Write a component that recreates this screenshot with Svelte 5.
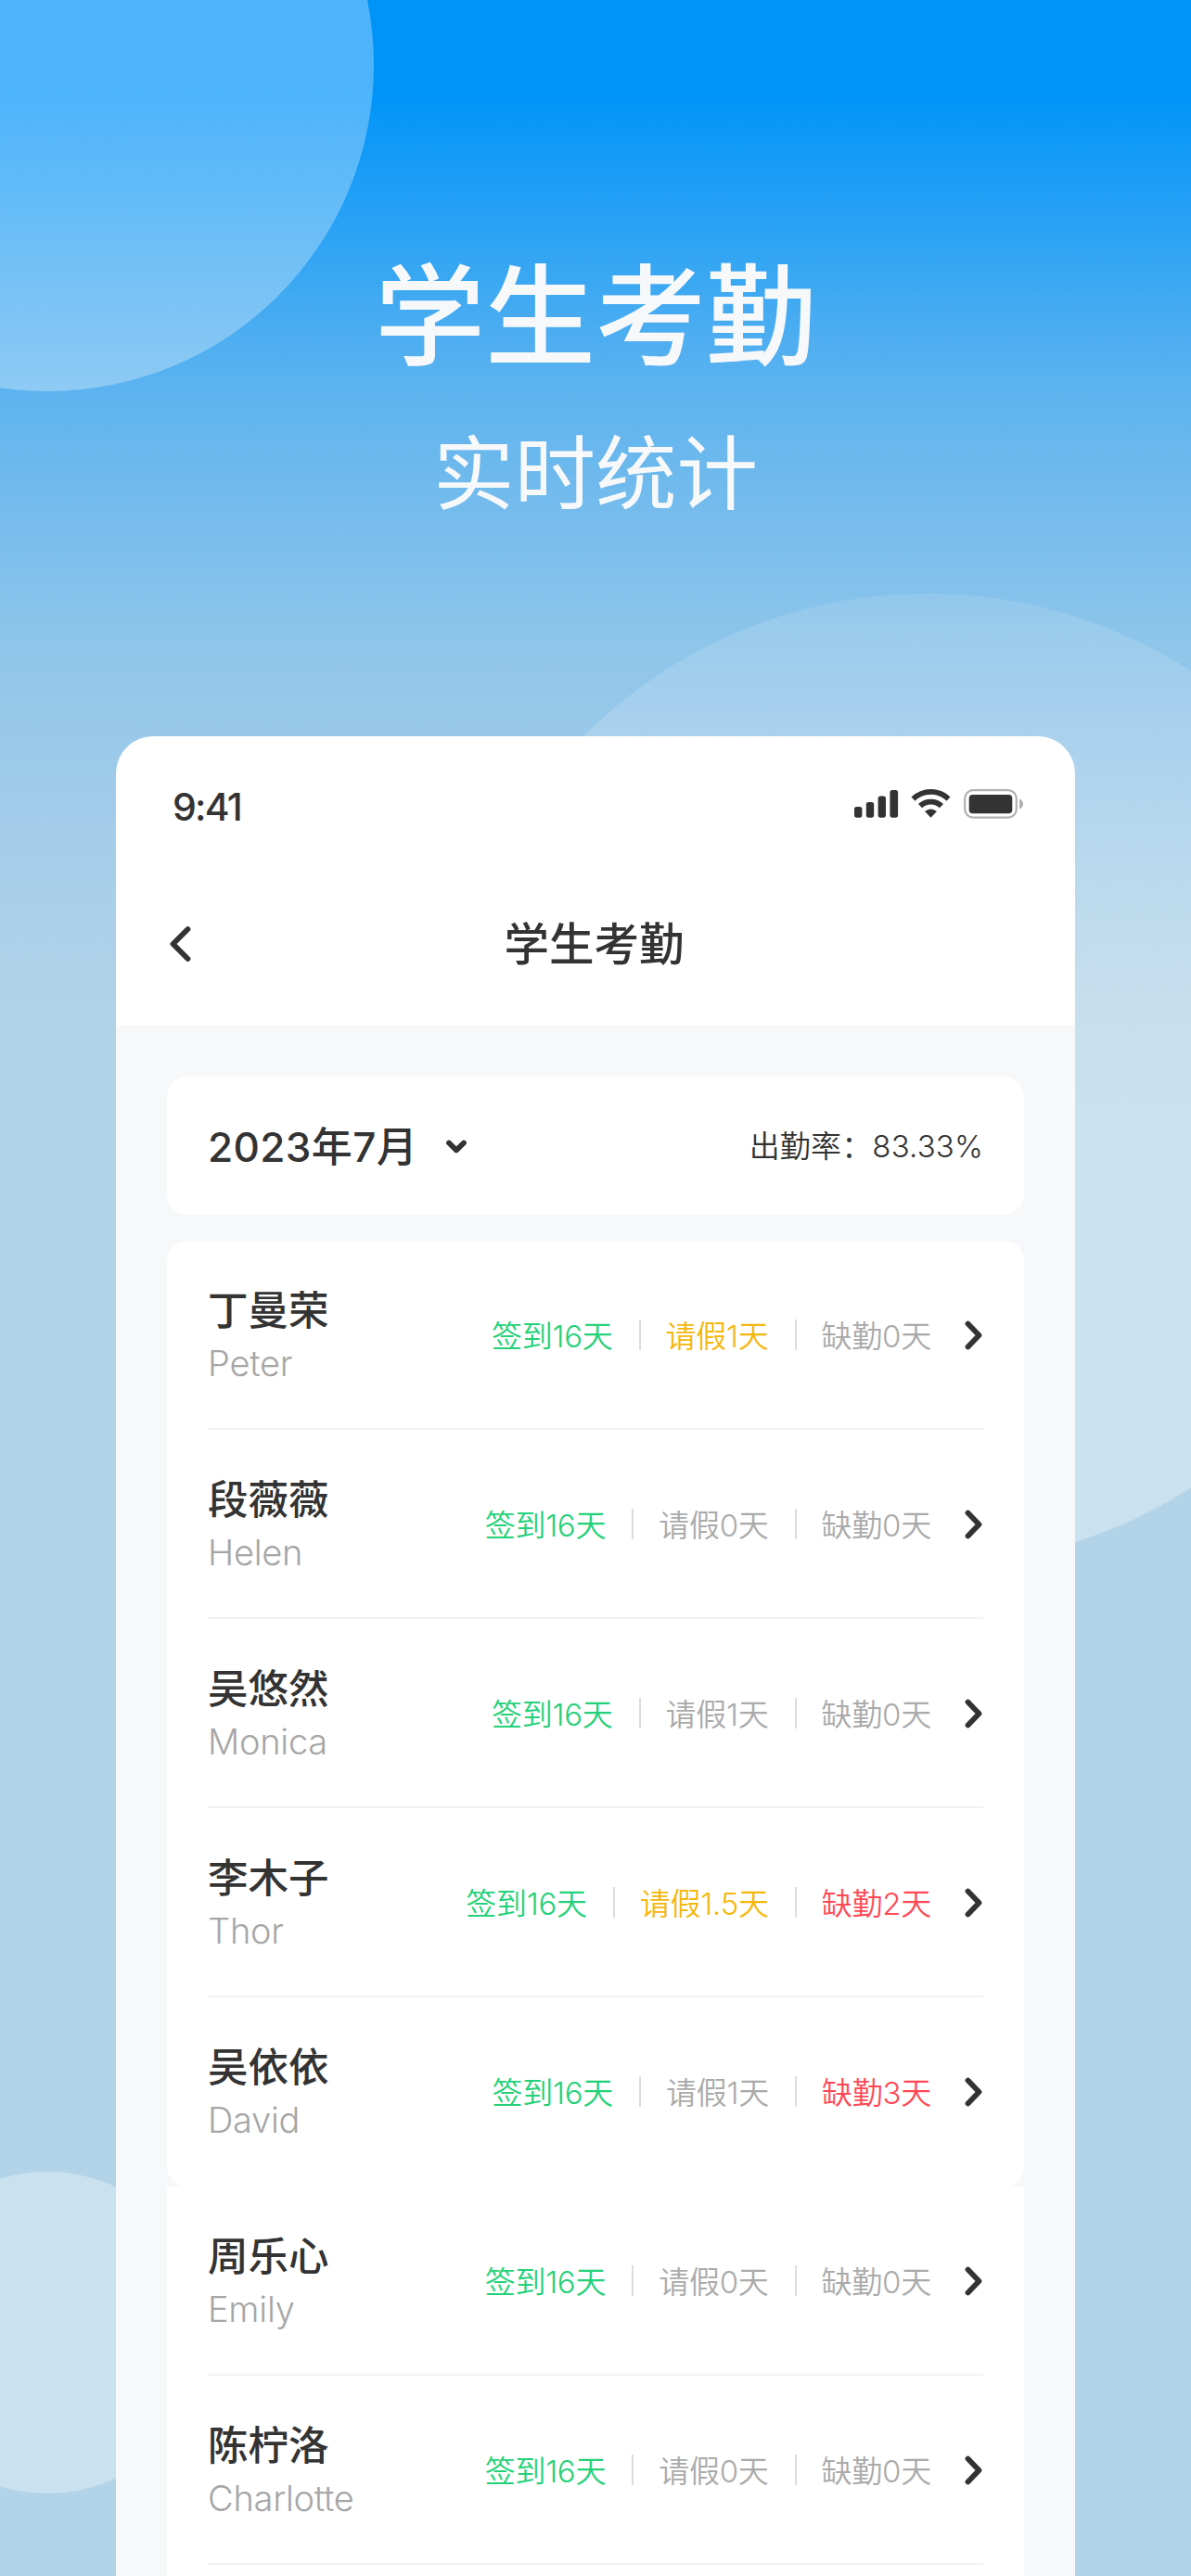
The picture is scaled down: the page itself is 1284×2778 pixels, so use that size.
<script lang="ts">
	type Student = {
		name: string;
		english: string;
		signed: number;
		leave: number;
		absent: number;
		leaveActive?: boolean;
	};

	const firstGroup: Student[] = [
		{ name: '丁曼荣', english: 'Peter', signed: 16, leave: 1, absent: 0, leaveActive: true },
		{ name: '段薇薇', english: 'Helen', signed: 16, leave: 0, absent: 0 },
		{ name: '吴悠然', english: 'Monica', signed: 16, leave: 1, absent: 0 },
		{ name: '李木子', english: 'Thor', signed: 16, leave: 1.5, absent: 2, leaveActive: true },
		{ name: '吴依依', english: 'David', signed: 16, leave: 1, absent: 3 }
	];

	const secondGroup: Student[] = [
		{ name: '周乐心', english: 'Emily', signed: 16, leave: 0, absent: 0 },
		{ name: '陈柠洛', english: 'Charlotte', signed: 16, leave: 0, absent: 0 }
	];
</script>

{#snippet row(student: Student)}
	<li class="row">
		<div class="person">
			<span class="name">{student.name}</span>
			<span class="english">{student.english}</span>
		</div>
		<div class="stats">
			<span class="signed">签到{student.signed}天</span>
			<i class="separator"></i>
			<span class:leave={student.leaveActive}>请假{student.leave}天</span>
			<i class="separator"></i>
			<span class:absent={student.absent > 0}>缺勤{student.absent}天</span>
			<svg class="arrow" width="20" height="32" viewBox="0 0 20 32">
				<path d="M3.5 3.5 L15.5 16 L3.5 28.5" />
			</svg>
		</div>
	</li>
{/snippet}

<main class="poster">
	<span class="circle top-left"></span>
	<span class="circle right"></span>
	<span class="circle bottom-left"></span>

	<header class="hero">
		<h1>学生考勤</h1>
		<p>实时统计</p>
	</header>

	<section class="phone">
		<div class="status-bar">
			<span class="time">9:41</span>
			<svg width="184" height="34" viewBox="0 0 184 34">
				<g fill="#333">
					<rect x="0" y="20" width="8.4" height="11.7" rx="2.6" />
					<rect x="12.8" y="15" width="8.4" height="16.7" rx="2.6" />
					<rect x="25.6" y="8.6" width="8.4" height="23.1" rx="2.6" />
					<rect x="38.4" y="2" width="8.7" height="29.7" rx="2.6" />
					<rect x="123.7" y="7" width="46.6" height="20.3" rx="4" />
				</g>
				<g fill="none" stroke="#333" stroke-width="5.8">
					<path d="M63.5 11.6 A27.2 27.2 0 0 1 101.5 11.6" />
					<path d="M71 19.2 A16.6 16.6 0 0 1 94 19.2" />
				</g>
				<path d="M76 25 Q82.5 20 89 25 L82.5 31.7 Z" fill="#333" />
				<rect x="119.2" y="2.2" width="55.6" height="29.4" rx="9" fill="none" stroke="#b0b0b0" stroke-width="2.2" />
				<path d="M178 11.5 Q182 13.5 182 17 Q182 20.5 178 22.5 Z" fill="#b0b0b0" />
			</svg>
		</div>

		<nav class="nav-bar">
			<svg width="24" height="40" viewBox="0 0 24 40">
				<path d="M20.5 4 L4.5 20 L20.5 36" />
			</svg>
			<h2>学生考勤</h2>
		</nav>

		<div class="content">
			<div class="summary">
				<span class="month">2023年7月</span>
				<svg class="chevron" width="24" height="16" viewBox="0 0 24 16">
					<path d="M4 3.5 L12 11.3 L20 3.5" />
				</svg>
				<span class="rate">出勤率：83.33%</span>
			</div>
			<ul class="list rounded">
				{#each firstGroup as student}
					{@render row(student)}
				{/each}
			</ul>
			<ul class="list fill">
				{#each secondGroup as student}
					{@render row(student)}
				{/each}
			</ul>
		</div>
	</section>
</main>

<style>
	:global(body) {
		margin: 0;
	}

	.poster {
		position: relative;
		display: flex;
		flex-direction: column;
		width: 1284px;
		height: 2778px;
		overflow: hidden;
		background: linear-gradient(
			180deg,
			#0094f9 0,
			#0094f9 100px,
			#5db3ef 420px,
			#8ec5ea 690px,
			#a6cee9 920px,
			#b0d2e8 1070px,
			#b3d4e8 1200px
		);
		font-family: Inter, 'Noto Sans CJK SC', sans-serif;
		font-variant-ligatures: none;
		color: #333;
	}

	h1,
	h2,
	p,
	ul {
		margin: 0;
		padding: 0;
		font-weight: 500;
	}

	svg {
		flex: none;
	}

	/* Decorative background circles */
	.circle {
		position: absolute;
		border-radius: 50%;
		background: rgba(255, 255, 255, 0.3);
	}

	.top-left {
		left: -301px;
		top: -282px;
		width: 704px;
		height: 704px;
	}

	.right {
		left: 476px;
		top: 640px;
		width: 1048px;
		height: 1048px;
		background: linear-gradient(180deg, rgba(255, 255, 255, 0.1), rgba(255, 255, 255, 0.3) 48%);
	}

	.bottom-left {
		left: -122px;
		top: 2342px;
		width: 347px;
		height: 347px;
	}

	.hero {
		position: relative;
		height: 794px;
		box-sizing: border-box;
		padding-top: 255px;
		text-align: center;
		color: #f7f8fa;
	}

	.hero h1 {
		font-size: 119px;
		line-height: 174px;
	}

	.hero p {
		margin-top: 18px;
		font-size: 87.5px;
		line-height: 128px;
		font-weight: 400;
	}

	.phone {
		position: relative;
		display: flex;
		flex-direction: column;
		flex: 1;
		width: 1034px;
		margin-left: 125px;
		border-radius: 40px 40px 0 0;
		background: #fff;
		overflow: hidden;
	}

	.status-bar {
		display: flex;
		align-items: center;
		justify-content: space-between;
		height: 146px;
		padding: 0 54px 0 61px;
	}

	.time {
		padding-top: 5px;
		font-size: 41px;
		font-weight: 500;
		letter-spacing: -1.8px;
	}

	.nav-bar {
		display: grid;
		grid-template-columns: 24px 1fr 24px;
		align-items: center;
		height: 166px;
		padding: 0 60px 10px 57px;
		box-sizing: border-box;
	}

	.nav-bar path,
	.chevron path,
	.arrow path {
		fill: none;
		stroke: #333;
		stroke-width: 5.8;
		stroke-linecap: round;
		stroke-linejoin: round;
	}

	.nav-bar h2 {
		padding-top: 1px;
		text-align: center;
		font-size: 48.5px;
		line-height: 70px;
	}

	.content {
		display: flex;
		flex-direction: column;
		flex: 1;
		padding: 55px 55px 0;
		background: #f7f8fa;
	}

	.summary {
		display: flex;
		align-items: center;
		height: 149px;
		margin-bottom: 28px;
		padding: 0 44px;
		border-radius: 22px;
		background: #fff;
	}

	.month {
		padding-bottom: 4px;
		font-size: 44px;
		font-weight: 500;
		letter-spacing: 0.4px;
	}

	.chevron {
		margin: 2px 0 0 30px;
	}

	.rate {
		margin-left: auto;
		padding-bottom: 3px;
		font-size: 33px;
		font-weight: 350;
		letter-spacing: 0.15px;
	}

	.list {
		padding: 0 44px;
		list-style: none;
		background: #fff;
	}

	.rounded {
		border-radius: 22px;
	}

	.fill {
		flex: 1;
	}

	.row {
		display: flex;
		align-items: center;
		justify-content: space-between;
		height: 204px;
		box-sizing: border-box;
		border-bottom: 2px solid #f2f2f2;
	}

	.rounded .row:last-child {
		border-bottom-color: transparent;
	}

	.person {
		display: flex;
		flex-direction: column;
		padding-top: 2px;
	}

	.name {
		font-size: 43.5px;
		line-height: 60px;
		font-weight: 500;
	}

	.english {
		font-size: 38px;
		line-height: 54px;
		font-weight: 300;
		letter-spacing: -0.25px;
		color: #a6a6a6;
	}

	.stats {
		display: flex;
		align-items: center;
		font-size: 33px;
		font-weight: 350;
		letter-spacing: -0.25px;
		color: #aaa;
	}

	.stats span {
		padding-bottom: 1px;
	}

	.signed {
		color: #24d178;
	}

	.leave {
		color: #f5b70b;
	}

	.absent {
		color: #ff4956;
	}

	.separator {
		width: 2px;
		height: 33px;
		margin: 0 27px 0 28px;
		background: #ddd;
	}

	.arrow {
		margin: 1px 0 0 36px;
	}
</style>
